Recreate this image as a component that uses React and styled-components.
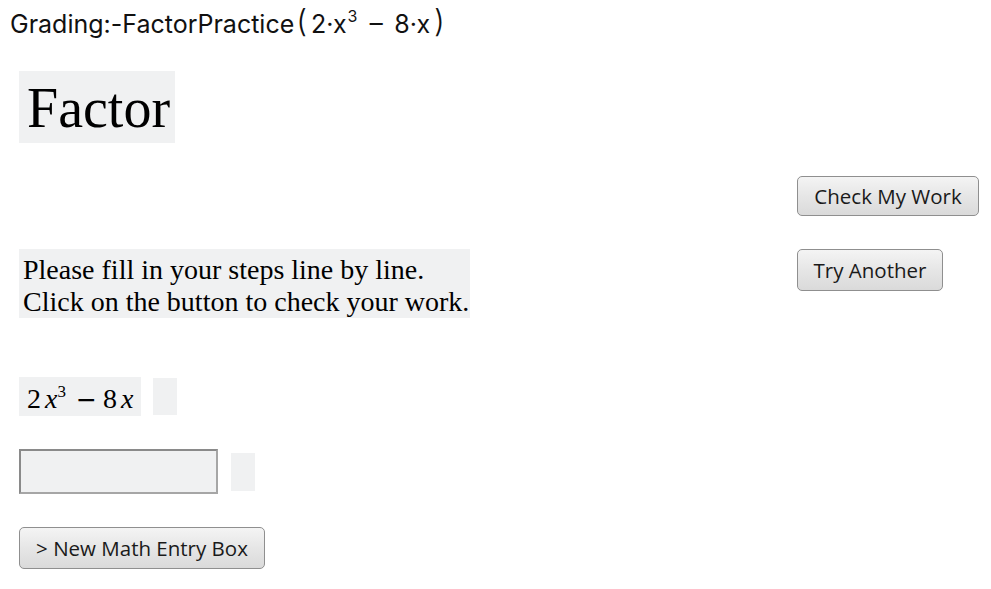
import React from "react";
import styled, { createGlobalStyle } from "styled-components";

const Global = createGlobalStyle`
  html, body { margin: 0; padding: 0; background: #ffffff; }
  body { width: 991px; height: 589px; overflow: hidden; }
`;

const Page = styled.div`
  padding: 8px 0 0 0;
`;

const Title = styled.div`
  font-family: "Inter", "Noto Sans", sans-serif;
  font-size: 25px;
  color: #111;
  padding-left: 10px;
  height: 32px;
  line-height: 28px;
  white-space: nowrap;
`;

const Paren = styled.span`
  font-size: 31px;
  font-weight: 300;
  margin: 0 ${(p) => p.r || 4}px 0 ${(p) => p.l || 2}px;
  display: inline-block;
  transform: translateY(-1px);
`;

const Sup = styled.sup`
  font-size: 16px;
  vertical-align: 11px;
  line-height: 0;
  margin: 0 2px 0 1px;
`;

const TMinus = styled.span`
  font-family: "Liberation Sans", sans-serif;
  font-size: 27px;
  font-weight: 300;
  margin: 0 10px 0 9px;
`;

const Grid = styled.div`
  display: grid;
  grid-template-columns: 778px auto;
  column-gap: 0;
  padding-left: 19px;
  margin-top: 31px;
`;

const Shade = styled.div`
  background: #f0f1f2;
  font-family: "Liberation Serif", "Times New Roman", serif;
  color: #000;
`;

const Heading = styled(Shade)`
  width: 156px;
  height: 72px;
  box-sizing: border-box;
  font-size: 56px;
  line-height: 74px;
  padding-left: 8px;
  grid-column: 1;
`;

const Button = styled.button`
  font-family: "Open Sans", "Noto Sans", sans-serif;
  font-size: 20.5px;
  color: #1a1a1a;
  height: ${(p) => p.h || 40}px;
  width: ${(p) => p.w}px;
  border: 1px solid #8f8f8f;
  border-radius: 5px;
  background: linear-gradient(#f4f4f4, #e6e6e6 50%, #dadada);
  padding: 0;
  display: flex;
  align-items: center;
  justify-content: center;
`;

const RightCell = styled.div`
  grid-column: 2;
  margin-top: ${(p) => p.mt || 0}px;
`;

const Instructions = styled(Shade)`
  grid-column: 1;
  justify-self: start;
  margin-top: 33px;
  width: 451px;
  height: 69px;
  box-sizing: border-box;
  font-size: 28px;
  line-height: 32px;
  padding: 5px 0 0 4px;
  white-space: nowrap;
`;

const Row = styled.div`
  grid-column: 1 / span 2;
  display: flex;
  align-items: center;
  gap: ${(p) => p.gap}px;
  margin-top: ${(p) => p.mt}px;
`;

const MathOut = styled(Shade)`
  width: 122px;
  height: 39px;
  box-sizing: border-box;
  font-size: 28px;
  line-height: 44px;
  padding-left: 8px;
  white-space: nowrap;
`;

const I = styled.i`
  font-style: italic;
  margin-left: 4px;
`;

const MSup = styled.sup`
  font-size: 17px;
  vertical-align: 11px;
  line-height: 0;
`;

const Minus = styled.span`
  font-family: "DejaVu Sans", sans-serif;
  font-size: 25px;
  margin: 0 6px 0 10px;
`;

const Blank = styled.div`
  background: #f0f1f2;
  width: ${(p) => p.w}px;
  height: ${(p) => p.h}px;
`;

const Input = styled.input`
  width: 199px;
  height: 45px;
  box-sizing: border-box;
  background: #f0f1f2;
  border: 2px solid;
  border-color: #8a8a8a #a6a6a6 #a6a6a6 #8a8a8a;
  outline: none;
  margin: 0;
  padding: 0 4px;
`;

export default function App() {
  return (
    <>
      <Global />
      <Page>
        <Title>
          Grading:-FactorPractice<Paren>(</Paren>2·x<Sup>3</Sup>
          <TMinus>−</TMinus>8·x<Paren l={4}>)</Paren>
        </Title>
        <Grid>
          <Heading>Factor</Heading>
          <RightCell />
          <div />
          <RightCell mt={33}>
            <Button w={182}>Check My Work</Button>
          </RightCell>
          <Instructions>
            Please fill in your steps line by line.
            <br />
            Click on the button to check your work.
          </Instructions>
          <RightCell mt={33}>
            <Button w={146} h={42}>Try Another</Button>
          </RightCell>
          <Row mt={59} gap={12}>
            <MathOut>
              2<I>x</I><MSup>3</MSup>
              <Minus>−</Minus>8<I>x</I>
            </MathOut>
            <Blank w={24} h={37} />
          </Row>
          <Row mt={33} gap={13}>
            <Input aria-label="math entry" />
            <Blank w={24} h={38} />
          </Row>
          <Row mt={33} gap={0}>
            <Button w={246} h={42}>&gt; New Math Entry Box</Button>
          </Row>
        </Grid>
      </Page>
    </>
  );
}
